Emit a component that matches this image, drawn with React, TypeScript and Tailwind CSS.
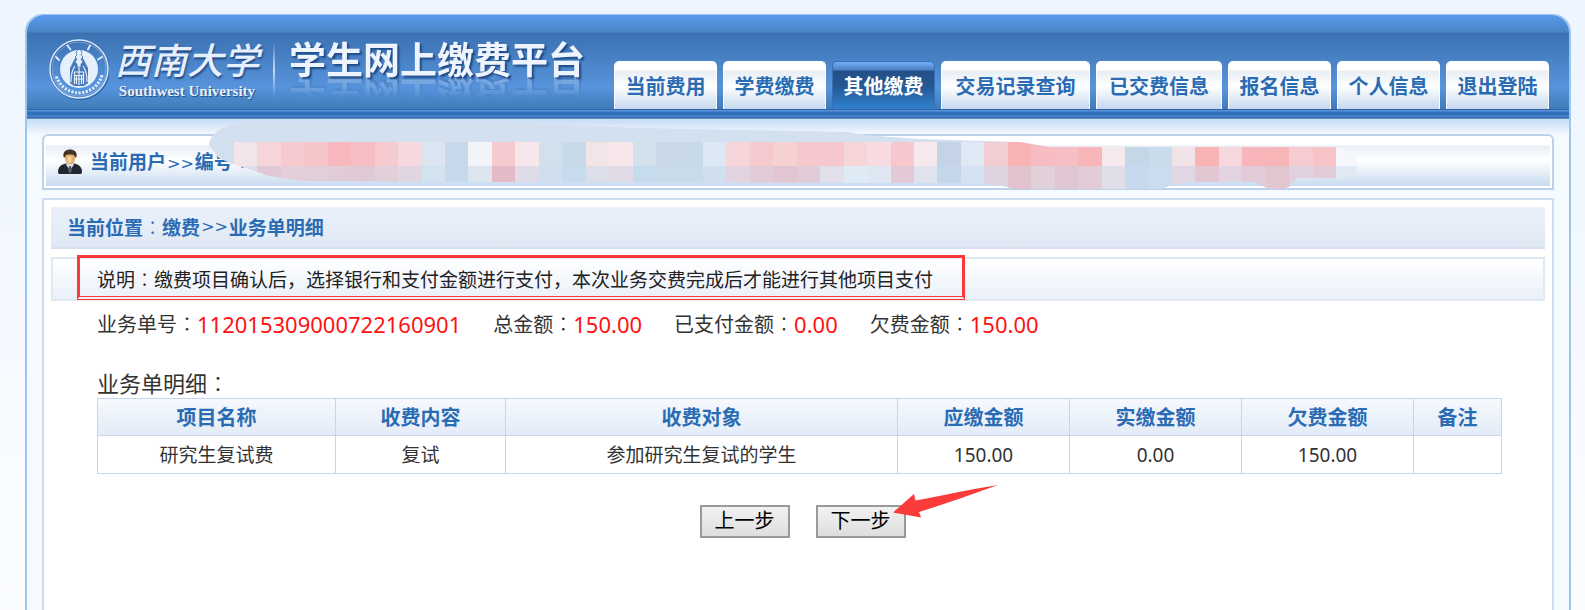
import { Fragment } from 'react'

const tabs = [
  { label: '当前费用', width: 'w-[103px]' },
  { label: '学费缴费', width: 'w-[103px]' },
  { label: '其他缴费', width: 'w-[103px]', active: true },
  { label: '交易记录查询', width: 'w-[149px]' },
  { label: '已交费信息', width: 'w-[126px]' },
  { label: '报名信息', width: 'w-[103px]' },
  { label: '个人信息', width: 'w-[103px]' },
  { label: '退出登陆', width: 'w-[103px]' },
]

const summary = [
  { label: '业务单号', value: '112015309000722160901' },
  { label: '总金额', value: '150.00' },
  { label: '已支付金额', value: '0.00' },
  { label: '欠费金额', value: '150.00' },
]

const columns = [
  { label: '项目名称', width: 'w-[238px]' },
  { label: '收费内容', width: 'w-[170px]' },
  { label: '收费对象', width: 'w-[392px]' },
  { label: '应缴金额', width: 'w-[172px]' },
  { label: '实缴金额', width: 'w-[172px]' },
  { label: '欠费金额', width: 'w-[172px]' },
  { label: '备注', width: 'w-[88px]' },
]

const rows = [['研究生复试费', '复试', '参加研究生复试的学生', '150.00', '0.00', '150.00', '']]

// Mosaic tiles: [upper colour, lower colour], left to right.
const tiles: [string, string][] = [
  ['#d2e0ee', '#d6e2f0'],
  ['#f2e5e9', '#dfdce9'],
  ['#f5d5da', '#e0c8d6'],
  ['#f6cacf', '#e2cfda'],
  ['#f6c5c9', '#e1ceda'],
  ['#f8b7bd', '#e1cbd7'],
  ['#f6bdc3', '#e0c9d6'],
  ['#f6cbd0', '#e2cfda'],
  ['#f6d9de', '#e1d5e2'],
  ['#dce4ef', '#d3e2ef'],
  ['#c6d8ea', '#c6d8ec'],
  ['#f2f4f9', '#dce4f0'],
  ['#f6cace', '#e4bac8'],
  ['#f7e6ea', '#dfdce8'],
  ['#d1e0ed', '#cfdff0'],
  ['#c8daea', '#c6dbeb'],
  ['#f2e5e8', '#dcdfea'],
  ['#f7e6ea', '#e0dbe6'],
  ['#d3e1ed', '#c6dbeb'],
  ['#c8d8e8', '#c9daea'],
  ['#c8d9e9', '#c8dbeb'],
  ['#dce8f3', '#cfdff0'],
  ['#f5d5da', '#e2d3e0'],
  ['#f5c9ce', '#e1cbd7'],
  ['#f6d1d2', '#e1c6d2'],
  ['#f6c7cc', '#e1cbd7'],
  ['#f6c8cd', '#e0dfea'],
  ['#f6d5d9', '#deebf5'],
  ['#f8dbe0', '#dfe7f2'],
  ['#f6c7cc', '#e2c9d5'],
  ['#f5e9ed', '#e0e3ee'],
  ['#c4d4e6', '#c5d7eb'],
  ['#dfe9f3', '#d4e3f3'],
  ['#f2ced3', '#dfd3df'],
  ['#f8b3b5', '#e2c2cc'],
  ['#f6bcc1', '#e1cfda'],
  ['#f6bfc5', '#e0c5d3'],
  ['#f8b6bb', '#e3ccd7'],
  ['#f5e9ee', '#dfdfea'],
  ['#c5d6e6', '#c6d9ef'],
  ['#cadbeb', '#cbdcee'],
  ['#f2e3e8', '#dfd8e4'],
  ['#f8b3b5', '#e2c6d1'],
  ['#f6d7db', '#e1d3df'],
  ['#f8b6ba', '#e1cbd7'],
  ['#f8b5b8', '#e1c5cf'],
  ['#f6ccd1', '#e1d0de'],
  ['#f6c3c7', '#e2cad6'],
  ['#f5f7fb', '#e0e9f5'],
]

function Colon() {
  return <span className="font-['Noto_Sans_CJK_JP',sans-serif] font-light">：</span>
}

function Chevrons() {
  return <span className="px-px font-['DejaVu_Sans',sans-serif] text-[16px] font-normal">&gt;&gt;</span>
}

function Seal() {
  return (
    <svg viewBox="0 0 60 62" className="mt-px h-[62px] w-[60px] shrink-0" aria-hidden="true">
      <g transform="translate(1 1)" stroke="#24548f" fill="none" opacity="0.6">
        <circle cx="30" cy="31" r="29" strokeWidth="2" />
      </g>
      <circle cx="30" cy="31" r="29" fill="none" stroke="#dce9fa" strokeWidth="1.4" />
      <circle cx="30" cy="31" r="27" fill="none" stroke="#9fc1ea" strokeWidth="0.6" />
      <circle cx="30" cy="31" r="23.800" fill="none" stroke="#dce9fa" strokeWidth="3.2" strokeDasharray="2.2 1.4" strokeDashoffset="1" pathLength="147" clipPath="url(#seal-lower)" />
      <clipPath id="seal-lower">
        <path d="M0 37h60v25H0z" />
      </clipPath>
      <g stroke="#e6f0fc" strokeWidth="1.800" strokeLinecap="round">
        <path d="M18.500 7.500l3 4M39 11.500l2-4M7 19l3 3M53 19l-4 2.500" />
      </g>
      <circle cx="30" cy="31" r="19" fill="#e6f0fc" />
      <path d="M21 45V30l3.500-7L27 19h6l2.500 4 3.500 7v15l-4 3H25z" fill="#4679b9" />
      <path d="M30 11l3 3-1 3 2 2-2 2 2 3-2 2v3h-4v-3l-2-2 2-3-2-2 2-2-1-3z" fill="#e6f0fc" stroke="#4679b9" strokeWidth="0.8" />
      <path d="M22 44c0-6 1-12 4-16M38 44c0-6-1-12-4-16M25.500 46V34h9v12M30 29v18M27.500 37v9M32.500 37v9M25.500 37.500h9M26 41h8" fill="none" stroke="#e6f0fc" strokeWidth="1.2" />
    </svg>
  )
}

function UserIcon() {
  return (
    <svg viewBox="0 0 26 26" className="h-[26px] w-[26px] shrink-0" aria-hidden="true">
      <path d="M1 23c0-5 3-7.500 8-8.500h8c5 1 8 3.500 8 8.500 0 1.500-1 2-2 2H3c-1 0-2-.5-2-2z" fill="#23272e" />
      <path d="M9.500 13.500h7v3L13 21l-3.500-4.500z" fill="#dce6f2" />
      <path d="M12 17h2l.8 5L13 25l-1.800-3z" fill="#55606e" />
      <path d="M7.500 6.500C7.500 3 10 2 13 2s5.500 1 5.500 4.500c0 5-2 9-5.500 9s-5.500-4-5.500-9z" fill="#e2b26b" />
      <path d="M10.500 7.500h3.500c1 3 .5 5.500-1.500 6.500-1.500-1-2.500-3.500-2-6.500z" fill="#f4d7a0" />
      <path d="M6.500 8C5.500 2.500 9 .5 13 .5S20.500 2.500 19.500 8L18 8.500C18 6 16 5.500 13 5.500S8 6 8 8.500z" fill="#45322b" />
    </svg>
  )
}

function Mosaic() {
  return (
    <svg viewBox="0 0 1150 68" className="absolute -top-[14px] left-[165px] h-[68px] w-[1150px]" aria-hidden="true">
      <clipPath id="mosaic-outline">
        <path d="M0 23C1 12 12 3 36 0H290L430 6L640 10L655 13L710 17L810 20L840 25H1130C1143 28 1148 36 1148 44C1146 52 1140 56 1127 56H1088L1080 65L1070 67L1058 66L1045 60H975L950 67H806L790 63L750 61L330 60L92 59L60 54L40 47L24 42L10 36Z" />
      </clipPath>
      <g clipPath="url(#mosaic-outline)" shapeRendering="crispEdges">
        <path d="M0 0H1150V68H0z" fill="#d3e0ef" />
        {tiles.map(([upper, lower], i) => (
          <Fragment key={i}>
            <rect x={1.5 + i * 23.45} y="20" width="24" height="24" fill={upper} />
            <rect x={1.5 + i * 23.45} y="44" width="24" height="24" fill={lower} />
          </Fragment>
        ))}
      </g>
    </svg>
  )
}

export default function App() {
  return (
    <div className="flex min-h-screen flex-col bg-linear-to-b from-[#edf5ff] via-[#f5f9ff] to-[#fbfdff] pt-[14px] pr-[14px] pl-[25px] font-['Noto_Sans_CJK_SC',sans-serif] text-[#333]">
      <div className="flex flex-1 flex-col rounded-t-[18px] border-x-2 border-t border-[#9cc6ea] bg-[#f5faff]">
        <header>
          <div className="flex h-[94px] items-end justify-between rounded-t-[17px] bg-[linear-gradient(to_bottom,#5a9aec_0,#4a84c8_17px,#3c72b2_18px,#457dc0_38px,#5894dc_72px,#3d7cba_94px)] pr-[20px] pl-[22px]">
            <div className="flex h-full items-start pt-[22px]">
              <Seal />
              <div className="ml-[4px] flex w-[148px] flex-col items-center text-[#e6f0fc]">
                <div className="text-[36px] leading-[42px] font-medium italic [text-shadow:1px_2px_2px_#1f4a85]">西南大学</div>
                <div className="mt-[2px] font-['Liberation_Serif',serif] text-[15px] leading-[20px] font-bold whitespace-nowrap [text-shadow:1px_1px_1px_#1f4a85]">Southwest University</div>
              </div>
              <div className="mt-[5px] ml-[12px] h-[56px] w-[2px] bg-linear-to-b from-transparent via-[#c8d8ec] to-transparent" />
              <h1 className="ml-[14px] text-[37px] leading-[42px] font-bold whitespace-nowrap text-[#edf4fd] [-webkit-box-reflect:below_-3px_linear-gradient(transparent_45%,rgba(255,255,255,0.3))] [text-shadow:2px_2px_2px_#1f4a85]">
                学生网上缴费平台
              </h1>
            </div>
            <nav className="flex gap-[6px]">
              {tabs.map((tab) => (
                <a
                  key={tab.label}
                  href="#"
                  aria-current={tab.active ? 'page' : undefined}
                  className={`${tab.width} flex h-[48px] items-center justify-center rounded-t-[5px] border-x border-t text-[20px] leading-[28px] font-bold whitespace-nowrap ${
                    tab.active
                      ? 'border-[#3a70b4] bg-[linear-gradient(to_bottom,#73aef8_0,#4a80c4_8px,#234f86_9px,#245794_24px,#3182d0_47px)] text-white'
                      : 'border-white bg-[linear-gradient(to_bottom,#fff_0,#fff_8px,#e6edf4_9px,#fff_24px,#f6f9fc_28px,#c5d8ef_47px)] text-[#2a6cb4]'
                  }`}
                >
                  {tab.label}
                </a>
              ))}
            </nav>
          </div>
          <div className="h-[10px] bg-[linear-gradient(to_bottom,#3561a4_0,#3561a4_1px,#5793dc_1px,#5793dc_2px,#3370bc_3px,#3370bc_6px,#5590d4_7px,#3b76bc_8px,#2f5fa0_9px,#a8bedc_10px)]" />
        </header>

        <div className="flex flex-1 flex-col bg-[linear-gradient(to_bottom,#c6dbf3_0,#f5faff_16px)] px-[15px] pt-[15px]">
          <section className="relative rounded-t-[6px] border-2 border-[#bdd2ea] bg-white p-[2px]">
            <div className="flex h-[48px] items-center bg-[linear-gradient(to_bottom,#fff_0,#fff_7px,#e6eef6_8px,#fff_22px,#f7fafc_26px,#c8dbf0_48px)] pl-[11px]">
              <UserIcon />
              <p className="ml-[7px] text-[19px] leading-[28px] font-bold text-[#2a6cb4]">
                当前用户
                <Chevrons />
                编号
                <Colon />
              </p>
            </div>
            <Mosaic />
          </section>

          <main className="mt-2 flex-1 border-x-2 border-t-2 border-[#cbdcf0] bg-white px-[7px] pt-[7px]">
            <h2 className="flex h-[42px] items-center border-b-2 border-[#d6e0f2] bg-linear-to-b from-[#eaf1fc] to-[#e0e9f3] pl-[16px] text-[19px] leading-[28px] font-bold text-[#2a6cb4]">
              当前位置
              <Colon />
              缴费
              <Chevrons />
              业务单明细
            </h2>

            <div className="mt-2 flex h-[44px] items-center border-2 border-[#e0e8f2] bg-linear-to-b from-white to-[#eaf0fa] pl-[25px]">
              <div className="relative py-2 pr-5 pl-[19px]">
                <p className="text-[19px] leading-[26px] whitespace-nowrap text-[#222]">
                  说明
                  <Colon />
                  缴费项目确认后，选择银行和支付金额进行支付，本次业务交费完成后才能进行其他项目支付
                </p>
                <div className="absolute -top-[3px] -right-[12px] bottom-0 -left-px border-3 border-b-4 border-[#fb3a3a] [border-bottom-style:double]" />
              </div>
            </div>

            <div className="pr-[45px] pl-[46px]">
              <dl className="mt-[7px] flex gap-8 text-[20px] leading-[32px]">
                {summary.map((item) => (
                  <div key={item.label} className="flex whitespace-nowrap">
                    <dt>
                      {item.label}
                      <Colon />
                    </dt>
                    <dd className="font-['Noto_Sans',sans-serif] text-[22px] text-[#f11]">{item.value}</dd>
                  </div>
                ))}
              </dl>

              <h3 className="mt-[26px] text-[22px] leading-[32px]">
                业务单明细
                <Colon />
              </h3>
              <table className="w-full table-fixed border-collapse text-center">
                <thead>
                  <tr className="h-[37px] bg-linear-to-b from-[#f6f9fd] to-[#e2ebf7]">
                    {columns.map((column) => (
                      <th key={column.label} scope="col" className={`${column.width} border border-[#c5d6ec] text-[20px] leading-[28px] font-bold text-[#2a6cb4]`}>
                        {column.label}
                      </th>
                    ))}
                  </tr>
                </thead>
                <tbody>
                  {rows.map((row) => (
                    <tr key={row[0]} className="h-[38px]">
                      {row.map((cell, i) => (
                        <td key={i} className="border border-[#c5d6ec] font-['Noto_Sans','Noto_Sans_CJK_SC',sans-serif] text-[19px] leading-[28px]">
                          {cell}
                        </td>
                      ))}
                    </tr>
                  ))}
                </tbody>
              </table>

              <div className="mt-[31px] flex justify-center gap-[26px] pl-2">
                <button type="button" className="h-[33px] w-[90px] border-2 border-[#9a9a9a] bg-linear-to-b from-[#f2f2f2] to-[#dedede] pb-1 text-[20px] leading-[24px] text-black">
                  上一步
                </button>
                <div className="relative">
                  <button type="button" className="h-[33px] w-[90px] border-2 border-[#9a9a9a] bg-linear-to-b from-[#f2f2f2] to-[#dedede] pb-1 text-[20px] leading-[24px] text-black">
                    下一步
                  </button>
                  <svg viewBox="0 0 106 34" className="absolute -top-[21px] left-[77px] h-[34px] w-[106px]" aria-hidden="true">
                    <path d="M0 28.500L21 10L22.500 16.500C48 12 78 5 105 1C80 10 52 20 26 28L28 33.500Z" fill="#fb3a3a" />
                  </svg>
                </div>
              </div>
            </div>
          </main>
        </div>
      </div>
    </div>
  )
}
